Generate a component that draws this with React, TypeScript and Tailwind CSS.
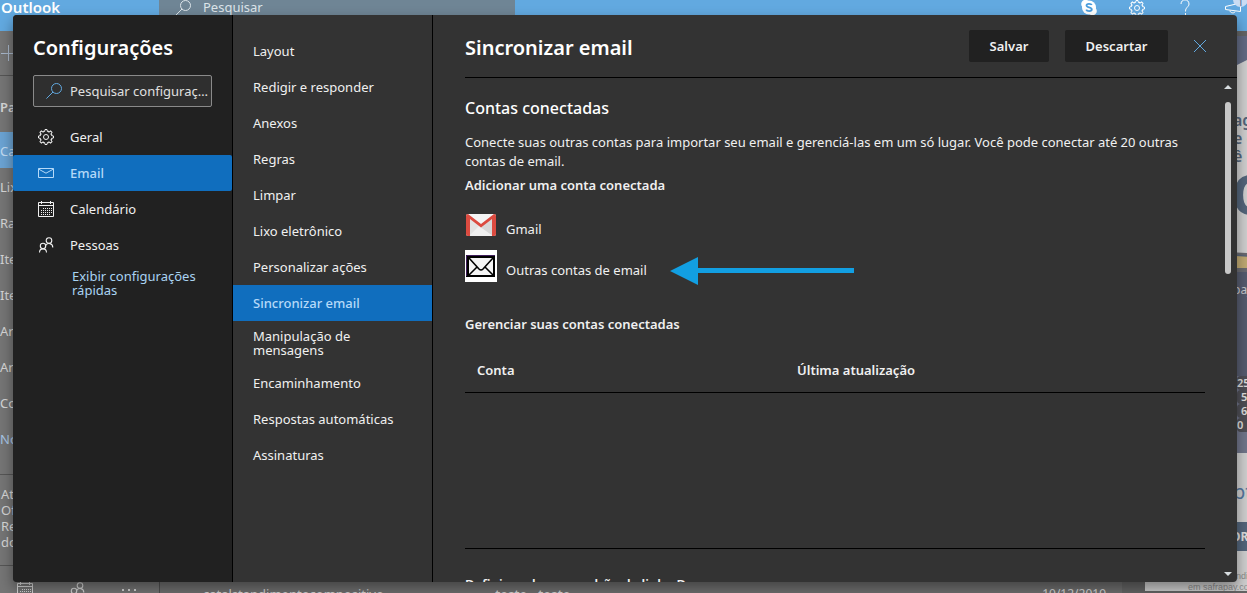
import type { ReactNode } from "react";

const categories = [
  { label: "Geral", icon: <GearIcon /> },
  { label: "Email", icon: <MailIcon />, active: true },
  { label: "Calendário", icon: <CalendarIcon /> },
  { label: "Pessoas", icon: <PeopleIcon /> },
];

const sections = [
  "Layout",
  "Redigir e responder",
  "Anexos",
  "Regras",
  "Limpar",
  "Lixo eletrônico",
  "Personalizar ações",
  "Sincronizar email",
  "Manipulação de mensagens",
  "Encaminhamento",
  "Respostas automáticas",
  "Assinaturas",
];

const folders = [
  { name: "Caixa", color: "bg-[#6ba3d3] text-[#c3dcf2]" },
  { name: "Lixo", color: "" },
  { name: "Rascunhos", color: "" },
  { name: "Itens", color: "" },
  { name: "Itens", color: "" },
  { name: "Arquivo", color: "" },
  { name: "Arquivo", color: "" },
  { name: "Conversas", color: "" },
  { name: "Nova pasta", color: "text-[#a9c6e6]" },
];

function GearIcon() {
  const teeth = Array.from({ length: 8 }, (_, i) => i * 45);
  return (
    <svg viewBox="0 0 16 16" className="size-4" fill="none" stroke="currentColor">
      {teeth.map((angle) => (
        <path
          key={angle}
          d="M5.300 2.200L6.600 2.500L7 .5H9L9.400 2.500L10.500 2.200"
          transform={`rotate(${angle} 8 8)`}
        />
      ))}
      <circle cx="8" cy="8" r="2.500" />
    </svg>
  );
}

function MailIcon() {
  return (
    <svg viewBox="0 0 16 16" className="size-4" fill="none" stroke="currentColor">
      <path d="M.5 3.500H15.500V12.500H.5ZM.5 4L8 8.200L15.500 4" />
    </svg>
  );
}

function CalendarIcon() {
  return (
    <svg viewBox="0 0 16 16" className="size-4" fill="none" stroke="currentColor">
      <path d="M.5 1.500H15.500V15.500H.5ZM.5 4.500H15.500M3.500 0V3M12.500 0V3" />
      <path d="M5 7.500H14M3 9.500H14M3 11.500H14M3 13.500H12" strokeDasharray="1 1" />
    </svg>
  );
}

function PeopleIcon() {
  return (
    <svg viewBox="0 0 16 16" className="size-4" fill="none" stroke="currentColor" strokeWidth="1.100">
      <circle cx="11" cy="3.500" r="2.800" />
      <circle cx="5" cy="9" r="2.700" />
      <path d="M1.500 15.500C1.500 10.600 8.500 10.600 8.500 15.500M8 8.200C9.300 5.800 14.800 5.600 14.800 10.500" />
    </svg>
  );
}

function SearchIcon() {
  return (
    <svg viewBox="0 0 16 16" className="size-4 shrink-0" fill="none" stroke="currentColor">
      <circle cx="10.500" cy="5.500" r="5" />
      <path d="M7 9L.4 15.600" />
    </svg>
  );
}

function SkypeIcon() {
  return (
    <svg viewBox="0 0 16 16" className="size-4" fill="currentColor">
      <circle cx="8" cy="7.500" r="7" />
      <circle cx="4.500" cy="4" r="4.300" />
      <circle cx="11.500" cy="11" r="4.300" />
      <path
        d="M10.800 5C10.200 3.600 5.500 3.200 5.500 5.500C5.500 7.900 10.800 6.700 10.800 9.300C10.800 11.700 5.900 11.400 5.200 9.600"
        fill="none"
        stroke="#4a9ddd"
        strokeWidth="1.800"
      />
    </svg>
  );
}

function HelpIcon() {
  return (
    <svg viewBox="0 0 16 16" className="size-4" fill="none" stroke="currentColor">
      <path d="M4 4C4 -1.500 12 -1.500 12 4C12 7 8.500 7 8.500 11.500M8.500 13V15" />
    </svg>
  );
}

function MegaphoneIcon() {
  return (
    <svg viewBox="0 0 16 16" className="size-4" fill="none" stroke="currentColor">
      <path d="M.5 6.500L15.500 3V11.500L.5 9.500ZM5 10.500C5 13.500 10 13.500 10 11.500" />
    </svg>
  );
}

function GmailLogo() {
  return (
    <svg viewBox="0 0 32 24" className="h-6 w-8">
      <rect x="1" y="1" width="30" height="22" rx="2" fill="#e3e3e3" />
      <path d="M4 23L14 13L16 14.500L18 13L28 23Z" fill="#f0f0f0" />
      <path d="M16 14.500L28 5V23Z" fill="#d8d8d8" />
      <path d="M3 1H29L16 11Z" fill="#f5f5f5" />
      <path
        d="M1 3V21Q1 23 3 23H5V6L16 14.500L27 6V23H29Q31 23 31 21V3Q31 1 29 1L16 11L3 1Q1 1 1 3Z"
        fill="#dc4b40"
      />
    </svg>
  );
}

function EnvelopeLogo() {
  return (
    <svg viewBox="0 0 32 32" className="size-8">
      <path d="M0 0H32V32H0Z" fill="#fff" />
      <path d="M1 5H30V27H1Z" fill="#000" />
      <path d="M1.500 26V5.500H30" fill="none" stroke="#3f1d5c" />
      <path d="M4 8H28V25H4Z" fill="#f4f4f4" />
      <path
        d="M4 8L14 19Q16 21 18 19L28 8M4 25L12 17M28 25L20 17"
        fill="none"
        stroke="#000"
        strokeWidth="1.600"
      />
    </svg>
  );
}

function NavItem({
  active,
  className,
  children,
}: {
  active?: boolean;
  className: string;
  children: ReactNode;
}) {
  return (
    <button
      type="button"
      className={`flex min-h-9 w-full items-center py-2 text-left leading-[14px] ${className} ${
        active ? "bg-[#106ebe] font-medium text-[#b5d9f8]" : ""
      }`}
    >
      {children}
    </button>
  );
}

function Banner() {
  return (
    <div className="mt-[5px] flex h-[555px] w-[102px] flex-col overflow-hidden bg-[#cfcfcf] whitespace-nowrap text-[#53657b] *:shrink-0">
      <svg viewBox="0 0 102 75" className="h-[75px]">
        <path d="M0 0H102V24L92 29L0 75Z" fill="#626a83" />
      </svg>
      <div className="pl-[88px] text-base leading-[18px] font-semibold">
        <p>ag</p>
        <p>e o</p>
        <p>ê</p>
      </div>
      <p className="h-[83px] pl-[86px] text-[56px] leading-[56px] font-bold">O</p>
      <svg viewBox="0 0 102 24" className="h-6">
        <path d="M0 0L102 5V24H0Z" fill="#6a6a70" />
        <path d="M0 0L102 8V20H0Z" fill="#c0a972" />
        <path d="M0 1L102 8" stroke="#596579" strokeWidth="1.500" />
      </svg>
      <div className="h-[104px] bg-[#555b6e] pt-2 pl-[88px] text-xs leading-5 text-[#c8c8cc]">pay</div>
      <div className="h-[77px] bg-[#70758a] pl-[92px] text-[11px] leading-[14px] font-semibold text-[#e0e0e0]">
        <p className="rounded-l-sm bg-[#4e4e55]">25</p>
        <p className="rounded-l-sm bg-[#4e4e55] pl-1">5</p>
        <p className="rounded-l-sm bg-[#4e4e55] pl-1">6</p>
        <p className="rounded-l-sm bg-[#4e4e55]">0</p>
      </div>
      <p className="h-[69px] pl-[88px] text-xl leading-[78px] text-[#54779f]">pt</p>
      <p className="h-[29px] bg-[#53657b] pl-[86px] text-xs leading-[29px] font-bold text-[#dddddd]">OR</p>
      <div className="pt-5 font-['Liberation_Sans',sans-serif] text-[9px] leading-[11px] text-[#8b8b8b]">
        <p className="pl-[91px]">ndi</p>
        <p className="pl-[43px]">em safrapay.com</p>
      </div>
    </div>
  );
}

/* The mailbox that stays visible around the dialog */
function Mailbox() {
  return (
    <div className="flex h-full flex-col overflow-hidden bg-[#757575] text-[#d6d6d6]">
      <header className="flex h-[31px] shrink-0 items-start bg-[#62a9e0] text-white">
        <span className="w-[159px] pl-px text-[15px] leading-[14px] font-semibold">Outlook</span>
        <div className="flex h-full w-[356px] items-start gap-3 bg-[#6f8595] pl-4 text-[#dce4e9]">
          <SearchIcon />
          <span className="leading-[14px]">Pesquisar</span>
        </div>
        <div className="ml-auto flex gap-8 pr-[6px]">
          <SkypeIcon />
          <GearIcon />
          <HelpIcon />
          <div className="relative">
            <MegaphoneIcon />
            <span className="absolute -top-2 left-2 h-[15px] w-[15px] rounded-full bg-[#c9dcf3] text-center text-[10px] leading-5 text-[#4c5f86]">
              1
            </span>
          </div>
        </div>
      </header>
      <div className="flex min-h-0 grow">
        <aside className="flex w-[160px] shrink-0 flex-col border-r border-[#505050] *:shrink-0">
          <div className="h-[45px] border-b border-[#555555] pt-[14px] text-[#a7b6c9]">
            <svg viewBox="0 0 16 16" className="size-4" fill="none" stroke="currentColor">
              <path d="M1 8.500H16M8.500 0V16" />
            </svg>
          </div>
          <p className="h-14 leading-[62px] font-semibold">Pastas</p>
          {folders.map((folder, i) => (
            <p key={i} className={`h-9 leading-[38px] ${folder.color}`}>
              {folder.name}
            </p>
          ))}
          <div className="mt-[18px] h-[92px] border-y border-[#555555] pt-[11px] pl-px leading-4">
            <p>Atualizar para o</p>
            <p>Office 365 com</p>
            <p>Recursos</p>
            <p>do Outlook</p>
          </div>
          <div className="flex gap-9 pt-4 pl-[17px]">
            <CalendarIcon />
            <PeopleIcon />
            <svg viewBox="0 0 16 16" className="size-4" fill="currentColor">
              <path d="M1 7H3V9H1ZM7 7H9V9H7ZM13 7H15V9H13Z" />
            </svg>
          </div>
        </aside>
        <main className="flex min-w-0 grow items-end bg-[#6f6f6f]">
          <div className="flex h-[6px] grow pr-4 pl-[43px] leading-[18px] *:-mt-[2px]">
            <span className="w-[292px]">catalstandimentocompositivo</span>
            <span className="font-semibold">teste - teste</span>
            <span className="ml-auto text-xs leading-[18px]">10/12/2019</span>
          </div>
        </main>
        <div className="flex bg-[#656565] pl-[23px]">
          <Banner />
        </div>
      </div>
    </div>
  );
}

export default function App() {
  return (
    <div className="relative h-screen overflow-hidden font-['Noto_Sans',sans-serif] text-[13px]">
      <Mailbox />
      <div
        role="dialog"
        aria-label="Configurações"
        className="absolute top-[15px] right-[10px] bottom-[11px] left-[13px] flex overflow-hidden rounded-sm bg-[#333333] text-[#f0f0f0] shadow-[0_6px_14px_rgba(0,0,0,0.4)]"
      >
        <nav className="w-[220px] shrink-0 border-r border-black bg-[#212121]">
          <h1 className="px-5 pt-[18px] text-xl leading-[30px] font-semibold text-white">Configurações</h1>
          <label className="mx-5 mt-3 mb-3 flex h-8 items-center gap-2 rounded-xs border border-[#8a8a8a] bg-[#2f2f2f] pl-3 text-[#62a9e0]">
            <SearchIcon />
            <input
              aria-label="Pesquisar configurações"
              placeholder="Pesquisar configurações"
              className="w-full min-w-0 pt-px text-ellipsis outline-none placeholder:text-[#e0e0e0]"
            />
          </label>
          {categories.map((item) => (
            <NavItem key={item.label} active={item.active} className="gap-4 rounded-xs pl-[25px]">
              {item.icon}
              {item.label}
            </NavItem>
          ))}
          <a href="#" className="mr-5 ml-[59px] block pt-[6px] leading-[14px] text-[#a9d3f2]">
            Exibir configurações rápidas
          </a>
        </nav>

        <nav className="w-[200px] shrink-0 border-r border-black pt-[18px]">
          {sections.map((item) => (
            <NavItem key={item} active={item === "Sincronizar email"} className="pr-8 pl-5">
              {item}
            </NavItem>
          ))}
        </nav>

        <section className="flex min-w-0 grow flex-col">
          <header className="ml-8 flex h-[63px] shrink-0 items-center gap-4 border-b border-black pr-[31px]">
            <h2 className="mr-auto pt-[3px] text-xl font-semibold text-white">Sincronizar email</h2>
            <button type="button" className="h-8 w-20 rounded-xs bg-[#212121] pt-px font-semibold">
              Salvar
            </button>
            <button type="button" className="h-8 w-[103px] rounded-xs bg-[#212121] pt-px font-semibold">
              Descartar
            </button>
            <button type="button" aria-label="Fechar" className="ml-[10px] text-[#62a9e0]">
              <svg viewBox="0 0 12 12" className="size-3" fill="none" stroke="currentColor">
                <path d="M0 0L12 12M12 0L0 12" />
              </svg>
            </button>
          </header>

          <div className="flex min-h-0 grow">
            <div className="grow overflow-hidden pt-[18px] pr-[14px] pl-8">
              <h3 className="text-base leading-6 font-medium text-white">Contas conectadas</h3>
              <p className="mt-[13px] leading-[19px]">
                Conecte suas outras contas para importar seu email e gerenciá-las em um só lugar. Você pode conectar até 20
                outras contas de email.
              </p>
              <h4 className="mt-1 leading-5 font-semibold">Adicionar uma conta conectada</h4>
              <button type="button" className="mt-[14px] flex h-8 items-center gap-[9px]">
                <GmailLogo />
                <span className="pt-[10px]">Gmail</span>
              </button>
              <div className="mt-[6px] flex items-center gap-[23px]">
                <button type="button" className="flex items-center gap-[9px]">
                  <EnvelopeLogo />
                  <span className="pt-[10px]">Outras contas de email</span>
                </button>
                <svg viewBox="0 0 184 28" className="mt-[10px] h-7 w-[184px]" fill="#129fe2">
                  <path d="M0 14L28 0V11H184V16H28V28Z" />
                </svg>
              </div>
              <h4 className="mt-[29px] leading-5 font-semibold">Gerenciar suas contas conectadas</h4>
              <table className="mt-[13px] w-full text-left">
                <thead>
                  <tr className="h-[45px] border-b border-black">
                    <th className="w-[332px] px-3 pt-[2px] font-semibold">Conta</th>
                    <th className="pt-[2px] font-semibold">Última atualização</th>
                  </tr>
                </thead>
                <tbody>
                  <tr className="h-[156px] border-b border-black">
                    <td colSpan={2} />
                  </tr>
                </tbody>
              </table>
              <h4 className="mt-[25px] leading-5 font-semibold">Definir endereço padrão da linha De</h4>
            </div>
            <div className="flex w-[18px] shrink-0 flex-col items-center pt-[7px] pb-[6px]">
              <svg viewBox="0 0 8 4" className="h-1 w-2" fill="#d7dde0">
                <path d="M0 4L4 0L8 4Z" />
              </svg>
              <div className="mt-[13px] h-[172px] w-[6px] rounded-full bg-[#c8c8c8]" />
              <svg viewBox="0 0 8 4" className="mt-auto h-1 w-2" fill="#d7dde0">
                <path d="M0 0H8L4 4Z" />
              </svg>
            </div>
          </div>
        </section>
      </div>
    </div>
  );
}
